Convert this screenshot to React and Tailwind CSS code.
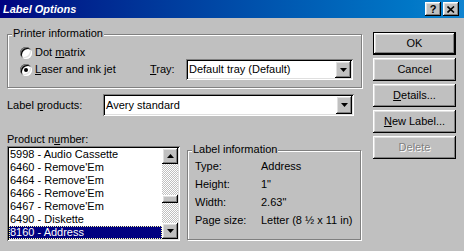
import React from 'react';

const raised =
  'bg-[#c0c0c0] shadow-[inset_-1px_-1px_0_#000,inset_1px_1px_0_#fff,inset_-2px_-2px_0_#808080,inset_2px_2px_0_#dfdfdf]';
const sunken =
  'bg-white shadow-[inset_1px_1px_0_#808080,inset_-1px_-1px_0_#fff,inset_2px_2px_0_#000,inset_-2px_-2px_0_#dfdfdf]';

const Arrow = ({ up }) => (
  <svg width="7" height="4" viewBox="0 0 7 4">
    {up ? <polygon points="3.5,0 7,4 0,4" fill="#000" /> : <polygon points="0,0 7,0 3.5,4" fill="#000" />}
  </svg>
);

const DropButton = () => (
  <div className={`w-[16px] h-full flex items-center justify-center ${raised}`}>
    <Arrow />
  </div>
);

const Select = ({ value, className }) => (
  <div className={`flex p-[2px] ${sunken} ${className}`}>
    <div className="flex-1 flex items-center pl-[1px] whitespace-nowrap overflow-hidden">{value}</div>
    <DropButton />
  </div>
);

const Radio = ({ checked }) => (
  <div className="w-[12px] h-[12px] rounded-full bg-white flex items-center justify-center shadow-[inset_1px_1px_0_#808080,inset_-1px_-1px_0_#fff,inset_2px_2px_0_#000,inset_-2px_-2px_0_#dfdfdf]">
    {checked && <div className="w-[4px] h-[4px] rounded-full bg-black" />}
  </div>
);

const Group = ({ title, className, children }) => (
  <div className={`relative border border-[#808080] shadow-[1px_1px_0_#fff,inset_1px_1px_0_#fff] ${className}`}>
    <span className="absolute top-[-8px] left-[4px] px-[1px] bg-[#c0c0c0] leading-[13px] whitespace-nowrap">{title}</span>
    {children}
  </div>
);

const Button = ({ children, primary, disabled }) => (
  <div
    className={`h-[23px] flex items-center justify-center ${raised} ${primary ? 'border border-black' : ''} ${
      disabled ? 'text-[#808080] [text-shadow:1px_1px_0_#fff]' : ''
    }`}
  >
    {children}
  </div>
);

const products = [
  "5998 - Audio Cassette",
  "6460 - Remove'Em",
  "6464 - Remove'Em",
  "6466 - Remove'Em",
  "6467 - Remove'Em",
  "6490 - Diskette",
  "8160 - Address",
];

const labelInfo = [
  ['Type:', 'Address'],
  ['Height:', '1"'],
  ['Width:', '2.63"'],
  ['Page size:', 'Letter (8 \u00bd x 11 in)'],
];

export default function App() {
  return (
    <div className="w-[464px] h-[251px] overflow-hidden bg-[#c0c0c0] text-black text-[11px] leading-[13px] font-['Liberation_Sans',Arial,sans-serif] flex flex-col select-none">
      {/* Title bar */}
      <div className="h-[18px] flex items-center justify-between pl-[3px] pr-[5px] bg-linear-to-r from-[#000080] to-[#1084d0]">
        <span className="text-white font-bold italic text-[11px]">Label Options</span>
        <div className="flex gap-[2px]">
          <div className={`w-[16px] h-[14px] flex items-center justify-center font-bold text-[11px] leading-none ${raised}`}>?</div>
          <div className={`w-[16px] h-[14px] flex items-center justify-center ${raised}`}>
            <svg width="8" height="7" viewBox="0 0 8 7">
              <path d="M0.5 0.5 L7 6.5 M7 0.5 L0.5 6.5" stroke="#000" strokeWidth="1.6" />
            </svg>
          </div>
        </div>
      </div>

      {/* Body */}
      <div className="flex pl-[7px]">
        {/* Left column */}
        <div className="w-[355px] flex flex-col pt-[16px]">
          <Group title="Printer information" className="h-[54px]">
            <div className="flex flex-col pl-[12px]">
              <div className="mt-[11px] h-[13px] flex items-center">
                <Radio />
                <span className="ml-[3px]">
                  Dot <u>m</u>atrix
                </span>
              </div>
              <div className="h-[21px] flex items-center">
                <div className="w-[130px] flex items-center">
                  <Radio checked />
                  <span className="ml-[3px]">
                    <u>L</u>aser and ink jet
                  </span>
                </div>
                <span className="w-[36px]">
                  <u>T</u>ray:
                </span>
                <Select value="Default tray (Default)" className="w-[167px] h-[21px]" />
              </div>
            </div>
          </Group>

          <div className="mt-[6px] h-[22px] flex items-center">
            <span className="w-[96px]">
              Label <u>p</u>roducts:
            </span>
            <Select value="Avery standard" className="w-[251px] h-[22px]" />
          </div>

          <div className="mt-[17px] h-[13px]">
            Product n<u>u</u>mber:
          </div>

          <div className="flex">
            {/* List box */}
            <div className={`w-[173px] h-[95px] p-[2px] flex ${sunken}`}>
              <div className="flex-1 flex flex-col overflow-hidden">
                {products.map((p, i) => (
                  <div
                    key={p}
                    className={`h-[13px] shrink-0 pl-[1px] whitespace-nowrap ${
                      i === products.length - 1
                        ? 'bg-[#000080] text-white outline-1 outline-dotted outline-[#ffffa0] -outline-offset-1'
                        : ''
                    }`}
                  >
                    {p}
                  </div>
                ))}
              </div>
              <div className="w-[16px] flex flex-col">
                <div className={`h-[16px] flex items-center justify-center ${raised}`}>
                  <Arrow up />
                </div>
                <div className="flex-1 bg-[repeating-conic-gradient(#c0c0c0_0_25%,#fff_0_50%)] bg-[length:2px_2px]">
                  <div className={`mt-[31px] h-[8px] ${raised}`} />
                </div>
                <div className={`h-[16px] flex items-center justify-center ${raised}`}>
                  <Arrow />
                </div>
              </div>
            </div>

            <Group title="Label information" className="ml-[7px] mt-[4px] w-[174px] h-[90px]">
              <div className="flex flex-col pt-[6px] pl-[7px]">
                {labelInfo.map(([k, v]) => (
                  <div key={k} className="h-[18px] flex items-center whitespace-nowrap">
                    <span className="w-[66px]">{k}</span>
                    <span>{v}</span>
                  </div>
                ))}
              </div>
            </Group>
          </div>
        </div>

        {/* Right column */}
        <div className="ml-[11px] w-[83px] pt-[14px] flex flex-col gap-[3px]">
          <Button primary>OK</Button>
          <Button>Cancel</Button>
          <Button>
            <span>
              <u>D</u>etails...
            </span>
          </Button>
          <Button>
            <span>
              <u>N</u>ew Label...
            </span>
          </Button>
          <Button disabled>Delete</Button>
        </div>
      </div>
    </div>
  );
}
